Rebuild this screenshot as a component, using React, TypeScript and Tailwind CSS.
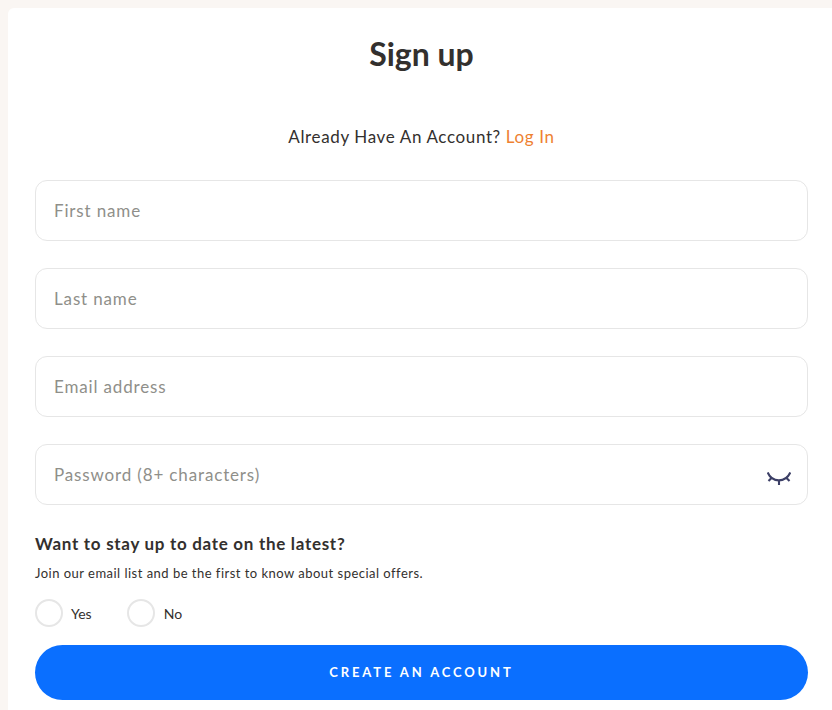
import React from "react";

function Field({ placeholder, children }: { placeholder: string; children?: React.ReactNode }) {
  return (
    <div className="relative">
      <input
        placeholder={placeholder}
        className="block w-full h-[61px] rounded-[12px] border border-[#e6e6e6] bg-white pl-[18px] pr-12 text-[17px] tracking-[0.85px] text-[#333] placeholder:text-[#8f8f8a] outline-none font-['Lato',sans-serif]"
      />
      {children}
    </div>
  );
}

function Radio({ label, className }: { label: string; className: string }) {
  return (
    <label className={className}>
      <span className="block w-[28px] h-[28px] rounded-full border-[2px] border-[#e6e6e6] bg-white" />
      <span className="text-[14px] text-[#33302e]">{label}</span>
    </label>
  );
}

export default function App() {
  return (
    <div className="h-[710px] overflow-hidden bg-[#faf6f3] pt-[8px] pl-[8px] font-['Lato',sans-serif]">
      <div className="h-[702px] bg-white rounded-tl-[6px] pl-[27px] pr-[24px]">
        <h1 className="h-[92px] pt-[24px] text-center text-[32px] leading-[44px] font-bold text-[#33302e]">Sign up</h1>
        <p className="mt-[25px] text-center text-[17px] leading-[24px] tracking-[0.63px] text-[#33302e]">
          Already Have An Account? <a className="text-[#ee8131]">Log In</a>
        </p>
        <div className="mt-[31px] flex flex-col gap-[27px]">
          <Field placeholder="First name" />
          <Field placeholder="Last name" />
          <Field placeholder="Email address" />
          <Field placeholder="Password (8+ characters)">
            <svg
              className="absolute right-[17px] top-[26px]"
              width="24"
              height="16"
              viewBox="0 0 24 16"
              fill="none"
              stroke="#3c3f66"
              strokeWidth="2.1"
            >
              <path d="M0.7 2.5 C5 13 18.5 13 23.3 2.5" />
              <path d="M1.5 11 L5 7.5" />
              <path d="M22.5 11 L19 7.5" />
              <path d="M12 10.5 V15" />
            </svg>
          </Field>
        </div>
        <h2 className="mt-[28px] text-[17px] leading-[22px] font-bold tracking-[0.7px] text-[#33302e]">Want to stay up to date on the latest?</h2>
        <p className="mt-[9px] text-[13px] leading-[18px] tracking-[0.48px] text-[#33302e]">Join our email list and be the first to know about special offers.</p>
        <div className="mt-[17px] flex gap-[35px]">
          <Radio label="Yes" className="flex items-center gap-[8px]" />
          <Radio label="No" className="flex items-center gap-[9px]" />
        </div>
        <button className="mt-[18px] block w-full h-[55px] rounded-full bg-[#0a6fff] text-white text-[13px] font-bold tracking-[2.85px] font-['Lato',sans-serif]">
          CREATE AN ACCOUNT
        </button>
      </div>
    </div>
  );
}
